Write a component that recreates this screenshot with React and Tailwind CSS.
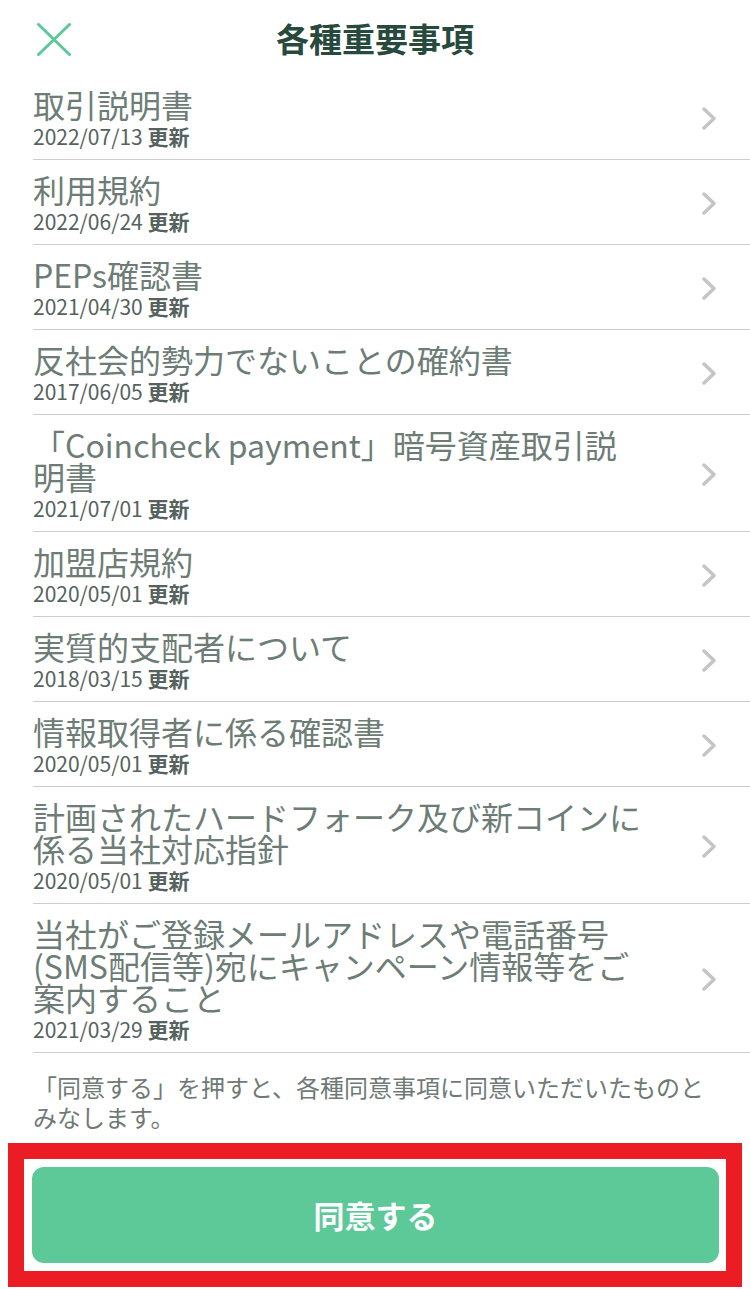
const items = [
  { title: ['取引説明書'], date: '2022/07/13' },
  { title: ['利用規約'], date: '2022/06/24' },
  { title: ['PEPs確認書'], date: '2021/04/30' },
  { title: ['反社会的勢力でないことの確約書'], date: '2017/06/05' },
  { title: ['「Coincheck payment」暗号資産取引説', '明書'], date: '2021/07/01' },
  { title: ['加盟店規約'], date: '2020/05/01' },
  { title: ['実質的支配者について'], date: '2018/03/15' },
  { title: ['情報取得者に係る確認書'], date: '2020/05/01' },
  { title: ['計画されたハードフォーク及び新コインに', '係る当社対応指針'], date: '2020/05/01' },
  {
    title: ['当社がご登録メールアドレスや電話番号', '(SMS配信等)宛にキャンペーン情報等をご', '案内すること'],
    date: '2021/03/29',
  },
]

export default function App() {
  return (
    <div className="w-[750px] h-[1289px] overflow-hidden bg-white font-['Noto_Sans_CJK_JP',sans-serif]">
      <header className="h-[75px] grid grid-cols-[1fr_auto_1fr] items-center">
        <button className="ml-[37px] mt-[3px] w-[34px] h-[33px]">
          <svg width="34" height="33" viewBox="0 0 34 33" fill="none">
            <path d="M1.5 1.5L32.5 31.5M32.5 1.5L1.5 31.5" stroke="#5dc898" strokeWidth="3" strokeLinecap="round" />
          </svg>
        </button>
        <h1 className="text-[33px] leading-[40px] font-bold text-[#284a3d]">各種重要事項</h1>
        <div />
      </header>

      <ul className="ml-[33px]">
        {items.map((item, i) => (
          <li
            key={i}
            className="flex items-center justify-between border-b border-[#cdcdcd] pt-[13px] pb-[11px] pr-[34px]"
          >
            <div>
              <p className="text-[32px] leading-[32px] text-[#6d7d76] whitespace-nowrap">
                {item.title.map((line, j) => (
                  <span key={j} className="block">
                    {line}
                  </span>
                ))}
              </p>
              <p className="mt-[4px] text-[21px] leading-[24px] text-[#55625d]">
                {item.date} <span className="font-bold">更新</span>
              </p>
            </div>
            <svg width="14" height="23" viewBox="0 0 14 23" fill="none" className="shrink-0">
              <path d="M2 2L12 11.5L2 21" stroke="#c5c5c5" strokeWidth="3.5" strokeLinecap="round" strokeLinejoin="round" />
            </svg>
          </li>
        ))}
      </ul>

      <p className="px-[33px] pt-[19px] text-[24px] leading-[30px] text-[#6f7a76]">
        「同意する」を押すと、各種同意事項に同意いただいたものと
        <br />
        みなします。
      </p>

      <div className="mt-[11px] ml-[8px] w-[734px] border-[16px] border-[#ec1c24] p-[8px] pr-[7px]">
        <button className="w-full h-[96px] rounded-[12px] bg-[#5dc898] text-white text-[31px] font-bold">
          同意する
        </button>
      </div>
    </div>
  )
}
